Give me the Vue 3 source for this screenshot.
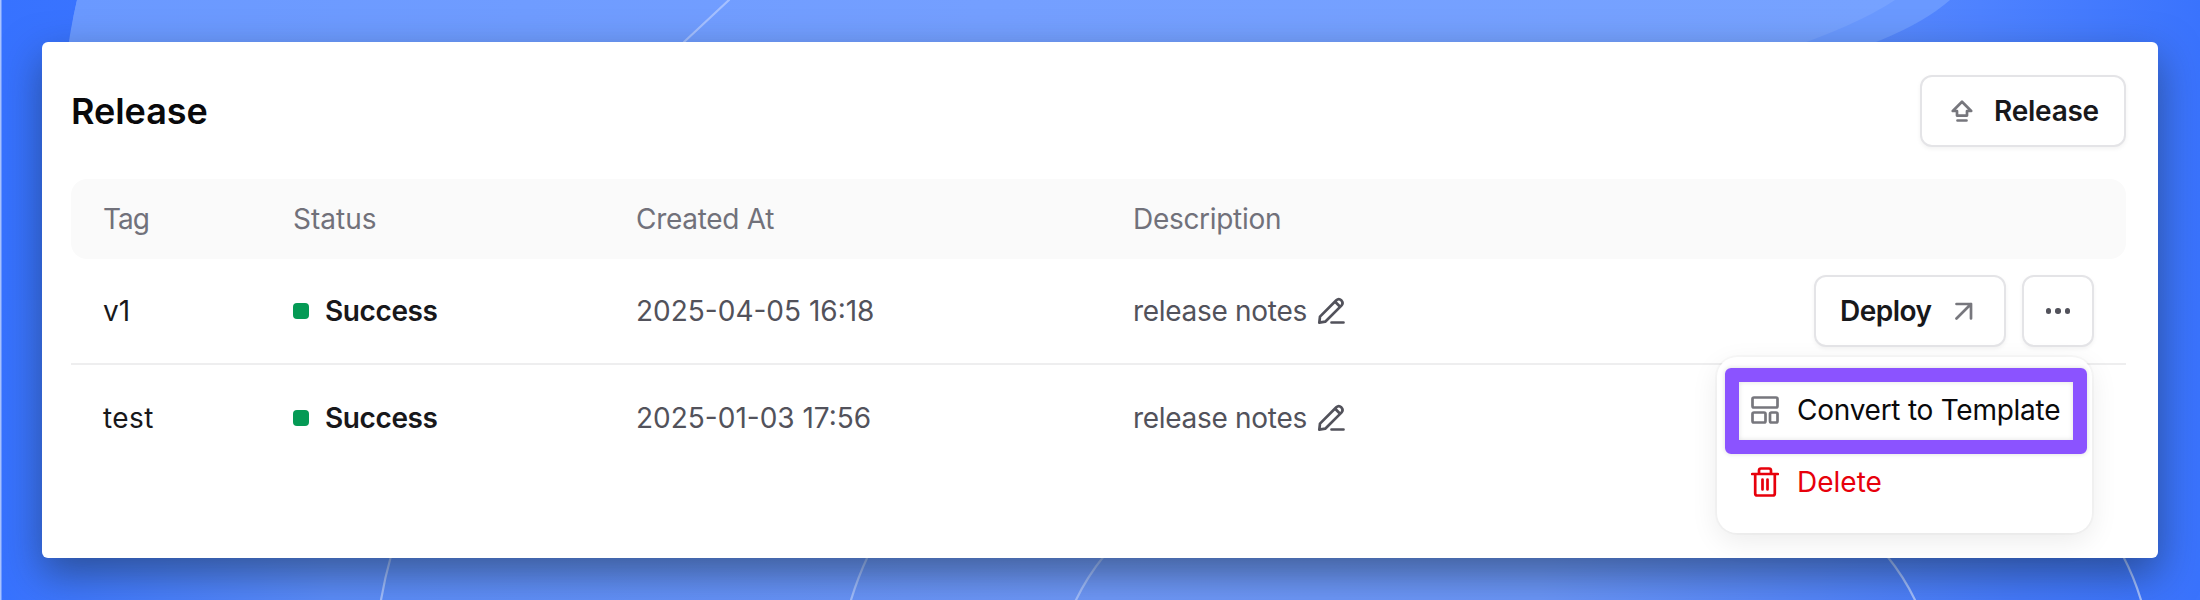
<script setup>
const rows = [
  { tag: 'v1', created: '2025-04-05 16:18', menu: true },
  { tag: 'test', created: '2025-01-03 17:56', menu: false },
]
</script>

<template>
  <div class="stage">
    <svg class="wall" viewBox="0 0 2200 600" preserveAspectRatio="none" aria-hidden="true">
      <defs>
        <linearGradient id="base" x1="0" x2="1" y1="0" y2="0">
          <stop offset="0" stop-color="#3772ff" />
          <stop offset=".8" stop-color="#608ffb" />
          <stop offset=".9" stop-color="#4e82ff" />
          <stop offset="1" stop-color="#3a73fd" />
        </linearGradient>
        <linearGradient id="top" x1="0" x2="1" y1="0" y2="0">
          <stop offset="0" stop-color="#6a99ff" />
          <stop offset=".5" stop-color="#749fff" />
          <stop offset="1" stop-color="#76a2ff" />
        </linearGradient>
        <linearGradient id="low" x1="0" x2="1" y1="0" y2="0">
          <stop offset="0" stop-color="#3772ff" />
          <stop offset=".15" stop-color="#5c8dfb" />
          <stop offset=".5" stop-color="#7099fa" />
          <stop offset=".7" stop-color="#6c97fa" />
          <stop offset=".92" stop-color="#4479fc" />
          <stop offset="1" stop-color="#3a73fd" />
        </linearGradient>
      </defs>
      <rect width="2200" height="600" fill="url(#base)" />
      <rect y="300" width="2200" height="300" fill="url(#low)" />
      <path d="M77 0Q70 30 66 62V100H1600Q1870 70 1950 0Z" fill="#6a99ff" />
      <path d="M77 0Q70 30 68 62V100H1600Q1820 50 1895 0Z" fill="url(#top)" />
      <g class="arcs">
        <path d="M729 0L684 42" />
        <path d="M391 556Q385 577 381 600" />
        <path d="M868 556Q858 577 851 600" />
        <path d="M1104 556Q1087 577 1076 600" />
        <path d="M1887 556Q1904 577 1915 600" />
        <path d="M2123 556Q2134 577 2141 600" />
      </g>
      <rect width="1.5" height="600" fill="#a9c3ff" />
    </svg>
    <main class="card">
      <header class="head">
        <h1>Release</h1>
        <button class="btn release">
          <svg width="22" height="22" viewBox="0 0 22 22"><path d="M11 1.8L1.8 11H6v4.6h10V11h4.2zM6.5 20.5h9" /></svg>
          <span>Release</span>
        </button>
      </header>
      <section class="table">
        <div class="row thead">
          <span class="tag-h">Tag</span><span>Status</span><span class="tight">Created At</span><span class="tight">Description</span>
        </div>
        <div v-for="r in rows" :key="r.tag" class="row">
          <span :class="{ loose: r.tag === 'test' }">{{ r.tag }}</span>
          <span class="status"><i></i><b>Success</b></span>
          <span class="created">{{ r.created }}</span>
          <span class="desc"><span class="tight">release notes</span>
            <svg width="28" height="28" viewBox="0 0 28 28"><path d="M2.3 25.7L3 19.6 19.3 3.3Q21.8 1 24.3 3.3 26.8 6 24.4 8.6L8.2 24.7ZM18.2 4.8L22.8 9.5M14.5 25.5H26.5" /></svg>
          </span>
          <div v-if="r.menu" class="actions">
            <button class="btn deploy"><span>Deploy</span>
              <svg width="18" height="18" viewBox="0 0 18 18"><path d="M1.5 2H16V16.5M16 2L1.5 16.5" /></svg>
            </button>
            <button class="btn more" aria-label="More"><i></i><i></i><i></i></button>
            <div class="menu">
              <div class="item convert">
                <svg width="28" height="28" viewBox="0 0 28 28"><rect x="1.5" y="1.5" width="25" height="10" rx="1.5" /><rect x="1.5" y="16.5" width="13" height="10" rx="1.5" /><rect x="19" y="16.5" width="7.5" height="10" rx="1.5" /></svg>
                <span>Convert to Template</span>
              </div>
              <div class="item delete">
                <svg width="28" height="30" viewBox="0 0 28 30"><path d="M1.2 7H26.8M4.2 7V26.5Q4.2 28.5 6.2 28.5H21.8Q23.8 28.5 23.8 26.5V7M8 7V3.5Q8 1.5 10 1.5H18Q20 1.5 20 3.5V7M11.5 12.5V22.5M16.5 12.5V22.5" /></svg>
                <span>Delete</span>
              </div>
            </div>
          </div>
        </div>
      </section>
    </main>
  </div>
</template>

<style>
body { margin: 0; }
</style>
<style scoped>
* { box-sizing: border-box; }
.stage { position: relative; width: 2200px; height: 600px; padding: 42px; overflow: hidden; font-family: Inter, "Liberation Sans", sans-serif; font-size: 28px; line-height: 36px; color: #18181b; white-space: nowrap; }
svg { display: block; flex: none; fill: none; stroke: currentColor; stroke-width: 2.7; stroke-linejoin: round; stroke-linecap: round; }
.wall { position: absolute; inset: 0; width: 100%; height: 100%; stroke: none; }
.arcs { stroke: #a5c0ff; stroke-width: 2.2; }
.card { position: relative; width: 2116px; height: 516px; padding: 33px 32px 0 29px; background: #fff; border-radius: 6px; box-shadow: 0 16px 40px rgba(25, 45, 70, .55); }
.head { display: flex; align-items: center; justify-content: space-between; height: 72px; }
h1 { margin: 0; font-size: 36px; line-height: 44px; font-weight: 580; color: #09090b; letter-spacing: -.05px; }
.btn { display: flex; align-items: center; height: 72px; border: 2px solid #e4e4e7; border-radius: 12px; background: #fff; box-shadow: 0 2px 4px rgba(0, 0, 0, .05); font: inherit; font-weight: 580; color: #18181b; padding: 0; letter-spacing: -.25px; }
.btn svg { color: #77777d; }
.release { width: 206px; padding-left: 29px; gap: 21px; }
.table { margin-top: 32px; width: 2055px; }
.row { position: relative; display: grid; grid-template-columns: 190px 343px 497px 1fr auto; height: 106px; align-items: center; padding: 0 32px; border-bottom: 2px solid #eeeeef; }
.row:last-child { border: 0; }
.thead { height: 80px; background: #fafafa; border: 0; border-radius: 16px; color: #71717a; }
.tag-h { letter-spacing: -1px; }
.tight { letter-spacing: -.3px; }
.loose { letter-spacing: .4px; }
.status { display: flex; align-items: center; gap: 16px; }
.status i { width: 16px; height: 16px; border-radius: 4px; background: #059a55; }
.status b { font-weight: 580; letter-spacing: -.4px; }
.created, .desc { color: #52525b; }
.desc { display: flex; align-items: center; gap: 10px; }
.actions { position: relative; display: flex; gap: 16px; }
.deploy { width: 192px; padding-left: 24px; gap: 23px; letter-spacing: -.5px; }
.more { width: 72px; justify-content: center; gap: 4px; }
.more i { width: 5.5px; height: 5.5px; border-radius: 50%; background: #52525b; }
.menu { position: absolute; z-index: 2; top: 82px; right: 2px; width: 375px; height: 176px; padding: 11px 5px 0 8px; background: #fff; border-radius: 20px; box-shadow: 0 0 0 2px rgba(0, 0, 0, .025), 0 8px 28px rgba(0, 0, 0, .08); }
.item { display: flex; align-items: center; gap: 18px; }
.convert { height: 86px; width: 362px; padding: 0 0 3px 12px; border: 14px solid #8b53ff; border-radius: 6px; color: #09090b; letter-spacing: -.25px; box-shadow: 0 0 5px rgba(0, 0, 0, .14), inset 0 0 5px rgba(0, 0, 0, .12); }
.convert svg { color: #77777d; }
.delete { height: 56px; padding-left: 26px; color: #e7000b; }
</style>
